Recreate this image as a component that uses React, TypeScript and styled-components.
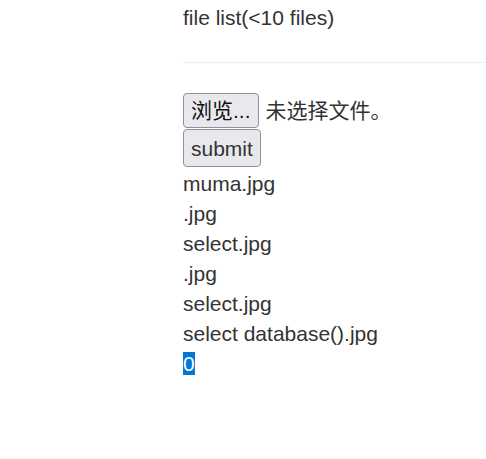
import styled, { createGlobalStyle } from "styled-components";

const GlobalStyle = createGlobalStyle`
  html, body {
    margin: 0;
    padding: 0;
    background: #fff;
  }
  body {
    font-family: "Liberation Sans", Arial, "Noto Sans CJK SC", sans-serif;
    font-size: 21px;
    line-height: 30px;
    color: #333;
  }
`;

const files = [
  "muma.jpg",
  ".jpg",
  "select.jpg",
  ".jpg",
  "select.jpg",
  "select database().jpg",
];

const App: React.FC = () => {
  return (
    <>
      <GlobalStyle />
      <Page>
        <Title>file list(&lt;10 files)</Title>
        <Rule />
        <UploadForm onSubmit={(e) => e.preventDefault()}>
          <FileRow>
            <Button type="button">浏览...</Button>
            <FileName>未选择文件。</FileName>
          </FileRow>
          <SubmitButton type="submit">submit</SubmitButton>
        </UploadForm>
        <FileList>
          {files.map((name, i) => (
            <FileItem key={i}>{name}</FileItem>
          ))}
          <FileItem>
            <Selected>0</Selected>
          </FileItem>
        </FileList>
      </Page>
    </>
  );
};

const Page = styled.div`
  padding: 3px 0 0 183px;
  width: 486px;
  box-sizing: border-box;
  overflow: hidden;
`;

const Title = styled.div`
  height: 30px;
`;

const Rule = styled.hr`
  margin: 29px 0 0;
  border: 0;
  border-top: 1px solid #eee;
  width: 100%;
`;

const UploadForm = styled.form`
  display: flex;
  flex-direction: column;
  align-items: flex-start;
  margin-top: 30px;
`;

const FileRow = styled.div`
  display: flex;
  align-items: center;
  gap: 7px;
`;

const Button = styled.button`
  font-family: "Liberation Sans", Arial, "Noto Sans CJK SC", sans-serif;
  font-size: 21px;
  color: #111;
  background: #e9e9ed;
  border: 1px solid #8f8f9d;
  border-radius: 4px;
  padding: 0 7px;
  height: 35px;
  line-height: 33px;
`;

const SubmitButton = styled(Button)`
  height: 38px;
  margin-top: 1px;
  color: #333;
`;

const FileName = styled.span`
  font-family: "Liberation Sans", Arial, "Noto Sans CJK SC", sans-serif;
`;

const FileList = styled.div`
  margin-top: 2px;
`;

const FileItem = styled.div`
  height: 30px;
`;

const Selected = styled.span`
  background: #0078d7;
  color: #fff;
`;

export default App;
